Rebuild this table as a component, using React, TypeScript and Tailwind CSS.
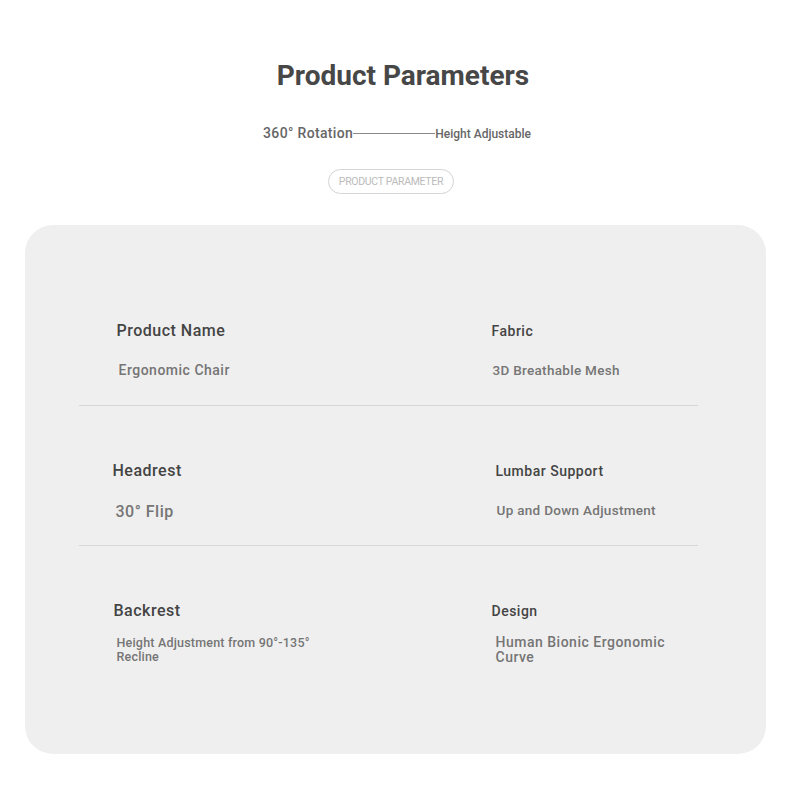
const rows = [
  {
    left: {label: "Product Name", value: "Ergonomic Chair", lx: "pl-[38px]", vx: "pl-[40px]", ls: "text-[16px]", vs: "text-[14px] tracking-[0.5px]", vm: "mt-[19px]"},
    right: {label: "Fabric", value: "3D Breathable Mesh", lx: "pl-[7px]", vx: "pl-[8px]", ls: "text-[14px]", vs: "text-[13.5px] tracking-[0.3px]", vm: "mt-[19px]"},
  },
  {
    left: {label: "Headrest", value: "30° Flip", lx: "pl-[34px]", vx: "pl-[37px]", ls: "text-[16px]", vs: "text-[16px] tracking-[0.5px]", vm: "mt-[19px]"},
    right: {label: "Lumbar Support", value: "Up and Down Adjustment", lx: "pl-[11px]", vx: "pl-[12px]", ls: "text-[14px]", vs: "text-[13.5px] tracking-[0.3px]", vm: "mt-[19px]"},
  },
  {
    left: {label: "Backrest", value: "Height Adjustment from 90°-135° Recline", lx: "pl-[35px]", vx: "pl-[38px] pr-[160px]", ls: "text-[16px]", vs: "text-[12.5px] leading-[14px] tracking-[0.2px]", vm: "mt-[15px]"},
    right: {label: "Design", value: "Human Bionic Ergonomic Curve", lx: "pl-[7px]", vx: "pl-[11px] pr-[30px]", ls: "text-[14px]", vs: "text-[14px] leading-[15px] tracking-[0.5px]", vm: "mt-[14px]"},
  },
];

type Cell = {label: string; value: string; lx: string; vx: string; ls: string; vs: string; vm: string};

const ParamCell = ({cell}: {cell: Cell}) => (
  <div className="flex flex-col pt-[55px]">
    <div className={`${cell.lx} ${cell.ls} h-[20px] leading-[20px] font-medium tracking-[0.5px] text-[#444]`}>
      {cell.label}
    </div>
    <div className={`${cell.vx} ${cell.vs} ${cell.vm} font-medium text-[#757575]`}>
      {cell.value}
    </div>
  </div>
);

const App = () => {
  return (
    <div className="w-[790px] min-h-[803px] bg-white font-['Roboto',sans-serif] flex flex-col items-center">
      <h1 className="mt-[58px] pl-4 h-[34px] leading-[36px] text-[28px] font-bold text-[#474747]">
        Product Parameters
      </h1>
      <div className="mt-[32px] flex items-center h-[18px] pl-1">
        <span className="text-[14px] font-medium tracking-[0.35px] text-[#666]">360° Rotation</span>
        <span className="w-[82px] h-px bg-[#8a8a8a]" />
        <span className="text-[12px] font-medium text-[#666] pt-[2px]">Height Adjustable</span>
      </div>
      <div className="mt-[27px] mr-2 h-[25px] px-[10px] flex items-center rounded-full border border-[#d4d4d4] text-[10.5px] text-[#bbb] tracking-[-0.3px]">
        PRODUCT PARAMETER
      </div>
      <div className="mt-[31px] mb-[49px] w-[741px] rounded-[28px] bg-[#efefef] pt-[41px] pb-[68px] pl-[54px] pr-[68px]">
        {rows.map((row, i) => (
          <div
            key={i}
            className={`grid grid-cols-[406px_1fr] h-[140px] ${i < 2 ? "border-b border-[#d6d6d6]" : ""}`}
          >
            <ParamCell cell={row.left} />
            <ParamCell cell={row.right} />
          </div>
        ))}
      </div>
    </div>
  );
};

export default App;
